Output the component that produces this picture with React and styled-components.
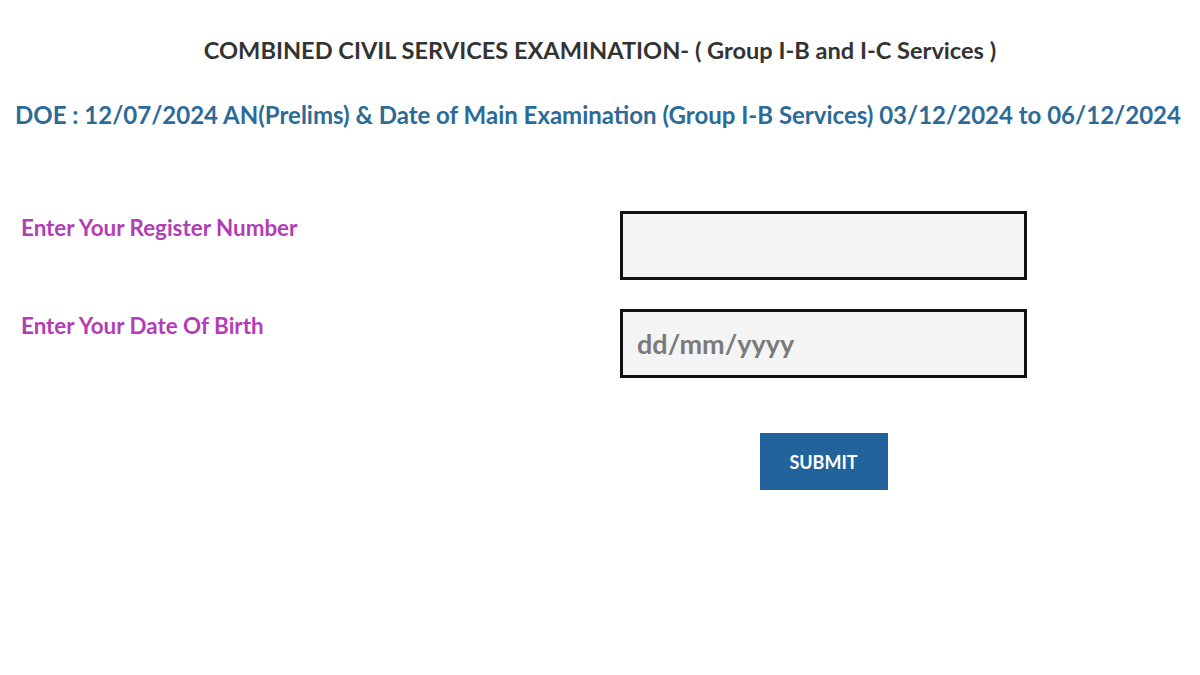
import React from 'react';
import styled, { createGlobalStyle } from 'styled-components';

const GlobalStyle = createGlobalStyle`
    html, body {
        margin: 0;
        padding: 0;
        background: #ffffff;
    }

    body {
        font-family: Lato, "Open Sans", sans-serif;
    }
`;

const Page = styled.div`
    width: 1200px;
    height: 675px;
    overflow: hidden;
    background: #fff;
`;

const Title = styled.h1`
    margin: 0;
    padding-top: 35px;
    text-align: center;
    font-size: 23.6px;
    font-weight: 700;
    color: #333;
    line-height: 30px;
`;

const ExamDates = styled.h2`
    margin: 0;
    padding: 35px 0 0 15px;
    font-size: 24px;
    font-weight: 700;
    color: #2c6a98;
    line-height: 30px;
    white-space: nowrap;
`;

const Form = styled.form`
    display: grid;
    grid-template-columns: 620px 407px;
    row-gap: 29px;
    margin-top: 81px;
`;

const Label = styled.label`
    padding: 3px 0 0 21px;
    font-size: 22.4px;
    font-weight: 700;
    color: #b23db6;
`;

const Field = styled.input`
    box-sizing: border-box;
    width: 407px;
    height: 69px;
    border: 3px solid #111;
    background: #f4f4f4;
    padding: 0 14px;
    font-family: Lato, sans-serif;
    font-size: 27px;
    font-weight: 700;
    color: #333;
    outline: none;

    &::placeholder {
        color: #7a7a7a;
    }
`;

const Actions = styled.div`
    grid-column: 2;
    display: flex;
    justify-content: center;
    margin-top: 26px;
`;

const SubmitButton = styled.button`
    width: 128px;
    height: 57px;
    border: none;
    background: #21639a;
    color: #fff;
    font-family: Lato, sans-serif;
    font-size: 18px;
    font-weight: 700;
    cursor: pointer;
`;

const App = () => {
    return (
        <Page>
            <GlobalStyle />
            <Title>COMBINED CIVIL SERVICES EXAMINATION- ( Group I-B and I-C Services )</Title>
            <ExamDates>
                DOE : 12/07/2024 AN(Prelims) &amp; Date of Main Examination (Group I-B Services) 03/12/2024 to 06/12/2024
            </ExamDates>

            <Form onSubmit={e => e.preventDefault()}>
                <Label htmlFor="regno">Enter Your Register Number</Label>
                <Field id="regno" type="text" />

                <Label htmlFor="dob">Enter Your Date Of Birth</Label>
                <Field id="dob" type="text" placeholder="dd/mm/yyyy" />

                <Actions>
                    <SubmitButton type="submit">SUBMIT</SubmitButton>
                </Actions>
            </Form>
        </Page>
    );
};

export default App;
